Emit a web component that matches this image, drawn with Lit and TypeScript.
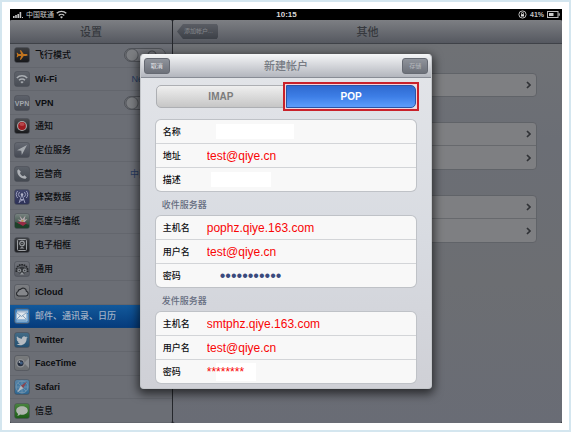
import { LitElement, html, css, svg, nothing, TemplateResult } from "lit";
import { customElement, property } from "lit/decorators.js";

type Row = { label: string; icon: string; toggle?: boolean; value?: string; selected?: boolean };
type Field = { id: string; label: string; kind: string; value: string };

const ROWS: Row[] = [
  { label: "飞行模式", icon: "plane", toggle: true },
  { label: "Wi-Fi", icon: "wifi", value: "NetEase" },
  { label: "VPN", icon: "vpn", toggle: true },
  { label: "通知", icon: "notice" },
  { label: "定位服务", icon: "location" },
  { label: "运营商", icon: "phone", value: "中国联通" },
  { label: "蜂窝数据", icon: "cell" },
  { label: "亮度与墙纸", icon: "wallpaper" },
  { label: "电子相框", icon: "frame" },
  { label: "通用", icon: "general" },
  { label: "iCloud", icon: "cloud" },
  { label: "邮件、通讯录、日历", icon: "mail", selected: true },
  { label: "Twitter", icon: "twitter" },
  { label: "FaceTime", icon: "facetime" },
  { label: "Safari", icon: "safari" },
  { label: "信息", icon: "message" },
];

const ACCOUNT: Field[] = [
  { id: "name", label: "名称", kind: "blank wide", value: "" },
  { id: "address", label: "地址", kind: "red", value: "test@qiye.cn" },
  { id: "note", label: "描述", kind: "blank", value: "" },
];
const INCOMING: Field[] = [
  { id: "in-host", label: "主机名", kind: "red", value: "pophz.qiye.163.com" },
  { id: "in-user", label: "用户名", kind: "red", value: "test@qiye.cn" },
  { id: "in-pass", label: "密码", kind: "dots", value: "12345678901" },
];
const OUTGOING: Field[] = [
  { id: "out-host", label: "主机名", kind: "red", value: "smtphz.qiye.163.com" },
  { id: "out-user", label: "用户名", kind: "red", value: "test@qiye.cn" },
  { id: "out-pass", label: "密码", kind: "red stars", value: "********" },
];

const wifiArcs = (c: string) => svg`
  <g fill="none" stroke=${c} stroke-width="1.5">
    <path d="M2.8 7a7.4 7.4 0 0 1 10.4 0"/><path d="M5 9.3a4.3 4.3 0 0 1 6 0"/>
  </g><path d="M6.4 10.9a2.3 2.3 0 0 1 3.2 0L8 12.6z" fill=${c}/>`;

const ICONS: Record<string, { bg: [string, string]; art: TemplateResult<2> }> = {
  plane: {
    bg: ["#3c3d40", "#17181a"],
    art: svg`<path d="M13.6 8c0-.6-.8-.9-1.500-.9H9.700L7 3.200H5.800l1.300 3.900H4.600L3.500 5.700h-.9L3.200 8l-.6 2.300h.9l1.100-1.400h2.500l-1.300 3.900H7l2.700-3.900h2.400c.7 0 1.500-.3 1.500-.9z" fill="#c0741f"/>`,
  },
  wifi: { bg: ["#5f636b", "#484c54"], art: svg`${wifiArcs("#a9adb2")}` },
  vpn: {
    bg: ["#5d616a", "#454952"],
    art: svg`<text x="8" y="11" text-anchor="middle" font-family="Liberation Sans, sans-serif" font-size="7" font-weight="bold" fill="#a3a7ac">VPN</text>`,
  },
  notice: {
    bg: ["#4c4e52", "#17181a"],
    art: svg`<circle cx="8" cy="8" r="5" fill="#a5a6a8"/><circle cx="8" cy="8" r="3.900" fill="#9c1b20"/><ellipse cx="8" cy="6.300" rx="2.600" ry="1.700" fill="#b6474b"/>`,
  },
  location: { bg: ["#666a73", "#444852"], art: svg`<path d="M13 3L3 8.200l4.300.5.500 4.300z" fill="#a5a9ae"/>` },
  phone: {
    bg: ["#5d626a", "#434850"],
    art: svg`<path d="M4.600 3.200L3.300 4.500c-.4 4.600 3.800 8.600 8.300 8.200l1.200-1.400-2.400-2-1.300 1c-1.500-.6-2.600-1.800-3.200-3.200l1-1.300z" fill="#adb0b5"/>`,
  },
  cell: {
    bg: ["#41466c", "#2d3156"],
    art: svg`<g fill="none" stroke="#9a9dba" stroke-width="1"><path d="M8 5.500L5 14M8 5.500L11 14M6.300 10.500h3.400M5.600 12.500l4.400-2M5.600 3a3.500 3.500 0 0 0 0 5M10.400 3a3.500 3.500 0 0 1 0 5M3.700 2a5 5 0 0 0 0 7M12.300 2a5 5 0 0 1 0 7"/></g><circle cx="8" cy="5.500" r="1.300" fill="#b2b4c8"/>`,
  },
  wallpaper: {
    bg: ["#7b8583", "#1f3a2c"],
    art: svg`<path d="M1 9l5 2 3-1 6 2v2l-2 1H3l-2-1z" fill="#1d4029"/><path d="M8 10L3.500 6.500 7 7 5.500 2.500l3 3.500L11.500 2.500l-.9 4.300L13.500 6l-3.700 4z" fill="#b5a8ae"/><path d="M3 9.500L8 8.500l5 1.500L9 13z" fill="#982b45"/><circle cx="8.500" cy="7.800" r="1.100" fill="#b79b4e"/>`,
  },
  frame: {
    bg: ["#3f4145", "#1c1d20"],
    art: svg`<rect x="3.500" y="2.500" width="9" height="11" rx="1" fill="none" stroke="#9b9ea2"/><circle cx="8" cy="6.500" r="2.300" fill="none" stroke="#9b9ea2" stroke-width="1.200"/><circle cx="8" cy="6.500" r=".7" fill="#9b9ea2"/><path d="M5.500 11.500q2.500-3 5 0z" fill="#9b9ea2"/>`,
  },
  general: {
    bg: ["#70737a", "#575a61"],
    art: svg`<path d="M2.500 11a5.700 5.700 0 1 1 11 0" fill="none" stroke="#25272a" stroke-width="1.800" stroke-dasharray="1.700 .7"/><path d="M3.500 11a4.600 4.600 0 1 1 9 0l-2 1.500h-5z" fill="#35383c"/><circle cx="5.300" cy="9.500" r="1.900" fill="#85888d"/><circle cx="10.700" cy="9.500" r="1.900" fill="#85888d"/><circle cx="5.300" cy="9.500" r=".7" fill="#35383c"/><circle cx="10.700" cy="9.500" r=".7" fill="#35383c"/><path d="M6 13.500l2-2.500 2 2.500z" fill="#9a9da1"/>`,
  },
  cloud: {
    bg: ["#7c7e82", "#6b6d71"],
    art: svg`<path d="M4.500 12A2.400 2.400 0 0 1 4 7.400a2.300 2.300 0 0 1 2.500-2A3.300 3.300 0 0 1 12.400 7.300 2.400 2.400 0 0 1 12 12z" fill="#85878b" stroke="#26282c" stroke-width="1.100"/>`,
  },
  mail: {
    bg: ["#3e80bd", "#5389bd"],
    art: svg`<rect x="3" y="2.500" width="11" height="2.500" fill="#a4b9cf"/><rect x="2.500" y="4.500" width="10" height="7" fill="#dfe6ec"/><path d="M2.500 4.500l5 4 5-4M2.500 11.500l4-4M12.500 11.500l-4-4" fill="none" stroke="#6c91b2" stroke-width=".8"/><path d="M2.500 13h10.500V6" fill="none" stroke="#aac7de"/>`,
  },
  twitter: {
    bg: ["#446c87", "#234f70"],
    art: svg`<path d="M13.800 5.300l-1.300.3.700-1.200-1.500.5C10 3.500 7.800 4.700 8 6.800 5.900 6.700 4.200 5.600 3 4.200c-.7 1.300-.3 2.500.7 3.300L2.700 7.300c0 1.200.8 2 1.900 2.400l-1 .1c.4.900 1.200 1.400 2.200 1.500-1 .7-2.100 1-3.400.9 4.600 2.700 10.400 0 10.200-5.700z" fill="#b5bbc1"/>`,
  },
  facetime: {
    bg: ["#797b7d", "#6a6d70"],
    art: svg`<path d="M15 3l-4 4v2l4 4z" fill="#8b8e92"/><circle cx="6.500" cy="8.300" r="4.300" fill="#8b8e92"/><circle cx="6.500" cy="8.300" r="3" fill="#232c3c"/><circle cx="7.300" cy="8" r="1.500" fill="#3f5c80"/><circle cx="5.400" cy="7" r=".9" fill="#a7abb0"/>`,
  },
  safari: {
    bg: ["#5a86a8", "#2c6590"],
    art: svg`<circle cx="8" cy="8" r="6" fill="#467ba3" stroke="#7c98ad" stroke-width=".8"/><path d="M8 2v12M2 8h12M4 4l8 8" stroke="#7f9db5" stroke-width=".6"/><path d="M13 2.500L9.200 9.200 6.800 6.800z" fill="#8a4650"/><path d="M3 13.500l3.800-6.700 2.400 2.400z" fill="#b2b9c0"/>`,
  },
  message: {
    bg: ["#4a8440", "#1c5c16"],
    art: svg`<path d="M8 3.200c3.300 0 5.800 1.800 5.800 4.300S11.300 11.800 8 11.800c-.6 0-1.200-.1-1.800-.2-.8.8-1.900 1.200-3 1.200.6-.6.900-1.300.9-2C2.900 10 2.200 8.800 2.200 7.500c0-2.500 2.500-4.300 5.800-4.300z" fill="#aeb5ad"/>`,
  },
};

@customElement("settings-icon")
export class SettingsIcon extends LitElement {
  @property() name = "wifi";
  static styles = css`
    :host { display: block; width: 16px; height: 16px; flex: none; }
    svg { display: block; }
  `;
  render() {
    const { bg, art } = ICONS[this.name];
    return html`<svg width="16" height="16" viewBox="0 0 16 16" aria-hidden="true">
      <defs><linearGradient id="g" x1="0" y1="0" x2="0" y2="1">
        <stop offset="0" stop-color=${bg[0]}/><stop offset="1" stop-color=${bg[1]}/>
      </linearGradient></defs>
      <rect x=".5" y=".5" width="15" height="15" rx="2.500" fill="url(#g)" stroke="#4b4f56" stroke-opacity=".6"/>
      ${art}
    </svg>`;
  }
}

@customElement("app-root")
export class AppRoot extends LitElement {
  static styles = css`
    :host {
      display: block;
      font-family: "Liberation Sans", "Noto Sans CJK SC", sans-serif;
      font-size: 9px;
      line-height: 12px;
      color: #0c0d10;
    }
    * { box-sizing: border-box; }
    button, input { font: inherit; margin: 0; padding: 0; border: 0; }
    h1, h2, h3 { margin: 0; font-weight: 500; }
    .page {
      display: flex;
      min-height: 100vh;
      border: 2px solid #d4e6ef;
      background: #fff;
      padding: 7px 7px 7px 8px;
    }
    .screen {
      flex: 1;
      display: grid;
      grid-template-rows: 11px 1fr;
      background: #000;
    }
    .status {
      display: grid;
      grid-template-columns: 1fr auto 1fr;
      align-items: center;
      color: #c4c4c4;
      font-size: 7px;
      line-height: 11px;
      padding: 0 2px 0 3px;
    }
    .status svg { display: block; }
    .carrier, .power { display: flex; align-items: center; gap: 3px; }
    .carrier { gap: 2px; }
    .power { justify-content: flex-end; font-weight: bold; }
    .clock { font-size: 8px; font-weight: bold; color: #d8d8d8; }
    .stage { display: grid; }
    .stage > * { grid-area: 1 / 1; }
    .split {
      display: grid;
      grid-template-columns: 162px 1fr;
      gap: 1px;
      background: #25272c;
    }
    .pane { display: flex; flex-direction: column; background: #6b6e75; border-radius: 2px; overflow: hidden; }
    .bar {
      flex: none;
      display: grid;
      grid-template-columns: 1fr auto 1fr;
      align-items: center;
      height: 24px;
      padding: 0 4px;
      background: linear-gradient(#7d7f83, #555860);
      border-bottom: 1px solid #3f4248;
    }
    .bar h1 { grid-column: 2; font-size: 11px; line-height: 16px; color: #36393e; }
    .list { flex: 1; display: grid; grid-auto-rows: 1fr; margin: 0; padding: 0; list-style: none; }
    .item { display: flex; border-bottom: 1px solid #63666d; }
    .link {
      flex: 1;
      display: flex;
      align-items: center;
      gap: 5px;
      padding: 0 6px 0 4px;
      color: #0c0d10;
      text-decoration: none;
      white-space: nowrap;
      min-width: 0;
    }
    .label { flex: 1; font-weight: 500; }
    .latin { font-weight: bold; }
    .value { color: #273a60; }
    .selected { background: linear-gradient(#12599b, #063c7d); border-color: #0a3f7a; }
    .selected .link { color: #a2b2c6; }
    .switch {
      appearance: none;
      width: 42px;
      height: 14px;
      border: 1px solid #4f5258;
      border-radius: 7px;
      background:
        radial-gradient(circle at 7px 6px, #7c7e82 5px, #54575c 6px, transparent 7px),
        radial-gradient(circle at 27px 6px, transparent 3px, #44474c 4px, transparent 5px),
        #73757b;
    }
    .back {
      justify-self: start;
      height: 15px;
      padding: 0 5px 0 7px;
      color: #85888d;
      font-size: 6px;
      line-height: 15px;
      background: linear-gradient(#5a5d64, #3c4047);
      clip-path: polygon(0 50%, 6px 0, 97% 0, 100% 2px, 100% 13px, 97% 100%, 6px 100%);
    }
    .detail { background: linear-gradient(#707275, #6b6e75 30%, #6c6e72 65%, #696c75); }
    .groups { display: grid; gap: 25px; padding: 29px 25px; }
    .group { border: 1px solid #606368; border-radius: 4px; background: #7e7f82; }
    .nav {
      display: flex;
      width: 100%;
      height: 22px;
      align-items: center;
      justify-content: flex-end;
      padding-right: 4px;
      background: none;
    }
    .nav + .nav { border-top: 1px solid #67696d; height: 24px; }
    .modal {
      justify-self: center;
      align-self: start;
      width: 53%;
      min-width: 280px;
      margin-top: 34px;
      padding-bottom: 5px;
      border-radius: 4px;
      background: linear-gradient(#e3e5e9, #d8dbe1 55%, #cfd0d6);
      border: 1px solid #c3c6ca;
      border-top-color: #f4f5f6;
      box-shadow: 0 3px 10px 2px rgba(0, 0, 0, .6);
    }
    .head {
      display: grid;
      grid-template-columns: 1fr auto 1fr;
      align-items: center;
      height: 23px;
      padding: 0 3px;
      background: linear-gradient(#f2f3f5, #b3b6be);
      border-bottom: 1px solid #888c95;
      border-radius: 4px 4px 0 0;
    }
    .head h2 { font-size: 11px; line-height: 16px; color: #777b83; }
    .tool {
      width: 26px;
      height: 16px;
      border: 1px solid #666a73;
      border-radius: 3px;
      background: linear-gradient(#8f939b, #6d717a);
      color: #e4e5e8;
      font-size: 6px;
      line-height: 14px;
    }
    .save { justify-self: end; color: #b5b8bd; }
    .body { padding: 7px 15px 0; }
    .seg { display: flex; margin-bottom: 12px; }
    .tab {
      flex: 1;
      height: 23px;
      font-size: 10px;
      line-height: 21px;
      font-weight: bold;
      color: #7c7c7c;
      border: 1px solid #adafb3;
      border-radius: 5px 0 0 5px;
      background: linear-gradient(#efefef, #c6c6c6);
    }
    .tab.on {
      position: relative;
      color: #fff;
      border-color: #2a55a5;
      border-radius: 0 5px 5px 0;
      background: linear-gradient(#2f6ad0, #3d7ee6 50%, #5d9dfa);
    }
    .tab.on::after {
      content: "";
      position: absolute;
      inset: -4px;
      border: 2px solid #c9212a;
      box-shadow: inset 0 0 0 1px #f3d3da;
      pointer-events: none;
    }
    .card {
      border-radius: 5px;
      background: #f8f8f8;
      box-shadow: 0 0 0 1px #bfc2c7;
    }
    .field { display: flex; align-items: center; height: 23px; padding-left: 7px; }
    .field + .field { border-top: 1px solid #d3d5d8; height: 24px; }
    .field label { width: 44px; flex: none; font-weight: 500; }
    .field input { flex: 1; min-width: 0; height: 18px; background: none; outline: none; }
    .field .red { color: #f90606; font-size: 12px; }
    .field .dots { color: #3a4a7d; font-size: 16px; padding-left: 13px; }
    .field .blank { flex: 0 1 60px; height: 15px; background: #fff; margin-left: 4px; }
    .field .wide { flex-basis: 78px; margin-left: 9px; }
    .field .stars { background: linear-gradient(#fff, #fff) 9px 0 / 40px 100% no-repeat; }
    .legend { padding: 8px 6px 5px; color: #666d80; font-size: 9px; }
  `;

  private card(fields: Field[]) {
    return html`<div class="card">
      ${fields.map(
        (f) => html`<div class="field">
          <label for=${f.id}>${f.label}</label>
          <input id=${f.id} class=${f.kind} type=${f.kind === "dots" ? "password" : "text"} .value=${f.value} />
        </div>`
      )}
    </div>`;
  }

  private nav(n: number) {
    return html`<div class="group">
      ${Array.from({ length: n }, () => html`<button class="nav" aria-label="添加">
        <svg width="6" height="8" viewBox="0 0 6 8"><path d="M1 1l3 3-3 3" fill="none" stroke="#303236" stroke-width="1.700"/></svg>
      </button>`)}
    </div>`;
  }

  render() {
    return html`<div class="page"><div class="screen">
      <header class="status">
        <div class="carrier">
          <svg width="11" height="6" viewBox="0 0 11 6" fill="#c4c4c4"><path d="M0 4h1.600v2H0zM2.200 3h1.600v3H2.200zM4.400 2H6v4H4.400zM6.600 0h1.600v6H6.600zM9 5h1v1H9z"/></svg>
          <span>中国联通</span>
          <svg width="11" height="9" viewBox="2 3.500 12 9.500">${wifiArcs("#c4c4c4")}</svg>
        </div>
        <span class="clock">10:15</span>
        <div class="power">
          <svg width="9" height="9" viewBox="0 0 9 9"><circle cx="4.500" cy="4.500" r="3.600" fill="none" stroke="#bbb"/><path d="M3 4.200h3v2.300H3z" fill="#ddd"/><path d="M3.500 4.200V3.400a1 1 0 0 1 2 0v.8" fill="none" stroke="#ddd" stroke-width=".8"/></svg>
          <span>41%</span>
          <svg width="13" height="7" viewBox="0 0 13 7"><rect x=".5" y=".5" width="10.500" height="6" fill="none" stroke="#bbb"/><rect x="2" y="2" width="4.500" height="3" fill="#ccc"/><path d="M11.500 2.200h1.300v2.600h-1.300z" fill="#bbb"/></svg>
        </div>
      </header>
      <div class="stage">
        <div class="split">
          <nav class="pane">
            <div class="bar"><h1>设置</h1></div>
            <ul class="list">
              ${ROWS.map((r) => {
                const latin = /^[A-Za-z-]+$/.test(r.label);
                const inner = html`<settings-icon name=${r.icon}></settings-icon>
                  <span class="label ${latin ? "latin" : ""}">${r.label}</span>
                  ${r.value ? html`<span class="value">${r.value}</span>` : nothing}
                  ${r.toggle ? html`<input class="switch" type="checkbox" />` : nothing}`;
                return html`<li class="item ${r.selected ? "selected" : ""}">
                  ${r.toggle ? html`<label class="link">${inner}</label>` : html`<a class="link" href="#">${inner}</a>`}
                </li>`;
              })}
            </ul>
          </nav>
          <main class="pane detail">
            <div class="bar"><button class="back">添加帐户...</button><h1>其他</h1></div>
            <div class="groups">${this.nav(1)}${this.nav(2)}${this.nav(2)}</div>
          </main>
        </div>
        <section class="modal" role="dialog" aria-labelledby="title">
          <div class="head">
            <button class="tool">取消</button>
            <h2 id="title">新建帐户</h2>
            <button class="tool save">存储</button>
          </div>
          <form class="body">
            <div class="seg">
              <button type="button" class="tab">IMAP</button>
              <button type="button" class="tab on">POP</button>
            </div>
            ${this.card(ACCOUNT)}
            <h3 class="legend">收件服务器</h3>
            ${this.card(INCOMING)}
            <h3 class="legend">发件服务器</h3>
            ${this.card(OUTGOING)}
          </form>
        </section>
      </div>
    </div></div>`;
  }
}
